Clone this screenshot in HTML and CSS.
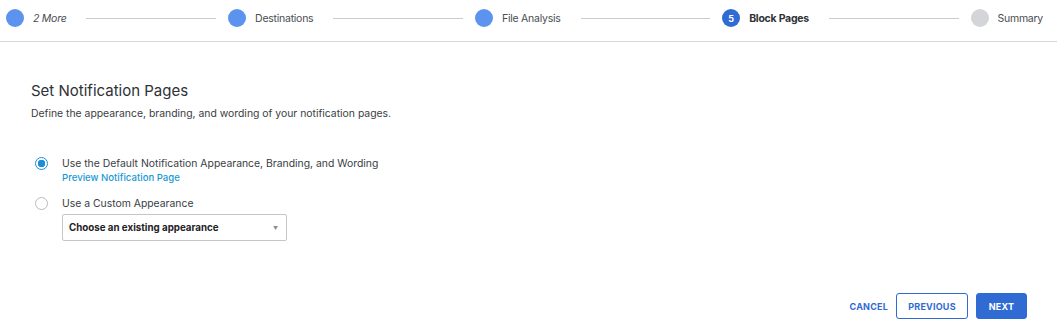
FILE: index.html
```html
<!DOCTYPE html>
<html>
<head>
<meta charset="utf-8">
<link rel="stylesheet" href="styles.css">
</head>
<body>
<div class="stepper">
  <div class="step done"><span class="dot"></span><span class="label italic">2 More</span></div>
  <div class="line"></div>
  <div class="step done"><span class="dot"></span><span class="label">Destinations</span></div>
  <div class="line"></div>
  <div class="step done"><span class="dot"></span><span class="label">File Analysis</span></div>
  <div class="line"></div>
  <div class="step active"><span class="dot">5</span><span class="label">Block Pages</span></div>
  <div class="line"></div>
  <div class="step todo"><span class="dot"></span><span class="label">Summary</span></div>
</div>
<main class="content">
  <h1 class="title">Set Notification Pages</h1>
  <p class="desc">Define the appearance, branding, and wording of your notification pages.</p>
  <div class="options">
    <div class="option">
      <span class="radio checked"></span>
      <div class="opt-body">
        <div class="opt-label">Use the Default Notification Appearance, Branding, and Wording</div>
        <a class="link">Preview Notification Page</a>
      </div>
    </div>
    <div class="option">
      <span class="radio"></span>
      <div class="opt-body">
        <div class="opt-label">Use a Custom Appearance</div>
        <div class="select"><span>Choose an existing appearance</span><span class="caret">▼</span></div>
      </div>
    </div>
  </div>
</main>
<div class="footer">
  <button class="btn text">CANCEL</button>
  <button class="btn outline">PREVIOUS</button>
  <button class="btn primary">NEXT</button>
</div>
</body>
</html>
```

FILE: styles.css
```css
* { box-sizing: border-box; }
html, body { margin: 0; padding: 0; }
body {
  width: 1057px;
  height: 336px;
  background: #fff;
  font-family: Inter, "Noto Sans", sans-serif;
  color: #3a3d42;
  position: relative;
}
.stepper {
  display: flex;
  align-items: center;
  height: 42px;
  padding: 0 14px 5px 6px;
  border-bottom: 1px solid #d4d6d9;
}
.step {
  display: flex;
  align-items: center;
  gap: 9px;
  font-size: 10.5px;
  letter-spacing: -0.25px;
  color: #4a4d52;
}
.dot {
  width: 18px;
  height: 18px;
  border-radius: 50%;
  background: #5b93ee;
  display: flex;
  align-items: center;
  justify-content: center;
  color: #fff;
  font-size: 9px;
  font-weight: 700;
  letter-spacing: 0;
}
.step.active .dot { background: #2f6bd2; }
.step.active .label { font-weight: 700; color: #2f3236; }
.step.todo .dot { background: #d3d5d9; }
.italic { font-style: italic; }
.line {
  flex: 1;
  height: 1px;
  background: #c9cbce;
  margin: 0 12px 0 20px;
}
.content {
  padding: 39px 31px 0;
}
.title {
  margin: 0;
  font-size: 15px;
  font-weight: 400;
  color: #2e3135;
  line-height: 20px;
}
.desc {
  margin: 6px 0 0;
  font-size: 10.4px;
  color: #3a3d42;
  line-height: 14px;
}
.options {
  margin-top: 35px;
  display: flex;
  flex-direction: column;
  gap: 12px;
}
.option {
  display: flex;
  align-items: flex-start;
  gap: 14px;
}
.radio {
  width: 13px;
  height: 13px;
  border-radius: 50%;
  border: 1px solid #b8bbbf;
  margin-top: 1px;
  margin-left: 4px;
  flex: none;
}
.radio.checked {
  border: 1.5px solid #1b8ed9;
  background: radial-gradient(circle, #1b8ed9 0 3.5px, #fff 4px);
}
.opt-label {
  font-size: 10.4px;
  line-height: 15px;
  color: #3a3d42;
}
.link {
  display: block;
  font-size: 9.6px;
  line-height: 13px;
  color: #1a99d6;
  font-weight: 500;
}
.select {
  margin-top: 3px;
  width: 225px;
  height: 27px;
  border: 1px solid #c4c6c9;
  border-radius: 2px;
  display: flex;
  align-items: center;
  justify-content: space-between;
  padding: 0 8px 0 6px;
  font-size: 9.75px;
  font-weight: 700;
  color: #1f2226;
}
.caret {
  font-size: 5px;
  color: #8a8d91;
  font-weight: 400;
}
.footer {
  position: absolute;
  right: 30px;
  top: 293px;
  display: flex;
  align-items: center;
  gap: 8px;
}
.btn {
  font-family: Inter, "Noto Sans", sans-serif;
  font-size: 9px;
  font-weight: 700;
  letter-spacing: 0.2px;
  height: 26px;
  border-radius: 3px;
  cursor: pointer;
}
.btn.text {
  background: none;
  border: none;
  color: #2f6bd2;
  padding: 0 0;
}
.btn.outline {
  background: #fff;
  border: 1px solid #2f6bd2;
  color: #2f6bd2;
  width: 72px;
}
.btn.primary {
  background: #2f6bd2;
  border: 1px solid #2f6bd2;
  color: #fff;
  width: 51px;
}
```
